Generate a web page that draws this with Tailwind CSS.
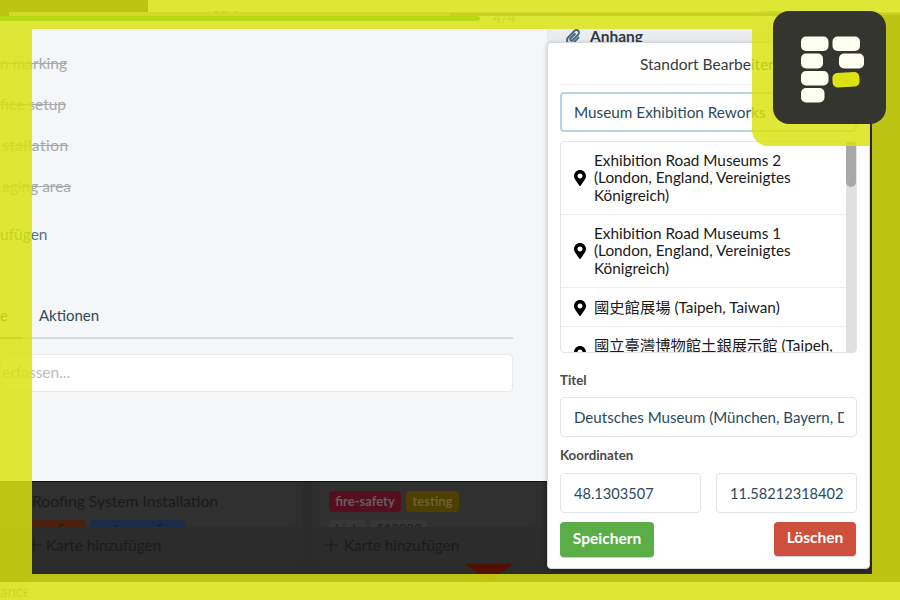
<!DOCTYPE html>
<html lang="de">
<head>
    <meta charset="UTF-8">
    <meta name="viewport" content="width=device-width, initial-scale=1.0">
    <script src="https://cdn.jsdelivr.net/npm/@tailwindcss/browser@4"></script>
    <title>Standort Bearbeiten</title>
</head>
<body class="relative w-[900px] h-[600px] overflow-hidden bg-[#f6f6f6] [font-family:Lato,'Noto_Sans_CJK_TC',sans-serif]">

    <!-- app behind the frame -->
    <div class="absolute left-[198px] top-[8px] h-[4px] overflow-hidden text-[12px] leading-[14px] text-[#888]">LABELS</div>
    <div class="absolute left-[750px] top-[8px] h-[4px] overflow-hidden text-[12px] leading-[14px] text-[#888]">LISTE</div>
    <div class="absolute left-[493px] top-[7px] text-[14px] text-[#999]">4/4</div>
    <div class="absolute left-0 top-0 w-[148px] h-[12px] bg-[#2a2a1a]"></div>
    <div class="absolute left-0 top-[12px] w-[9px] h-[4px] bg-[#2a2a1a]"></div>
    <div class="absolute left-[9px] top-[12px] w-[891px] h-[4px] bg-[#a8a8a0]"></div>
    <div class="absolute left-[450px] top-[13px] w-[450px] h-[3px] bg-[#777770]"></div>
    <div class="absolute left-0 top-[16px] w-[480px] h-[5px] rounded-r bg-[#0ca52a]"></div>
    <div class="absolute left-[870px] top-[15px] w-[30px] h-[567px] bg-[#2a2a2a]"></div>
    <div class="absolute left-0 top-[582px] w-[28px] h-[18px] overflow-hidden bg-[#ececec] text-[15px] leading-[18px] text-[#999]">ance</div>

    <!-- dark board under the modal -->
    <div class="absolute left-0 top-[482px] w-[900px] h-[100px] bg-[#2a2b2a] flex gap-[9px] text-[#1b1c1c]">
        <div class="w-[303px] h-[81px] shrink-0 rounded-b bg-[#2e2e2e] flex flex-col">
            <div class="h-[45px] mr-[8px] bg-[#303030] pl-[32px] pt-[9px] overflow-hidden">
                <div class="text-[15.7px] leading-[20px]">Roofing System Installation</div>
                <div class="flex gap-[4px] mt-[9px] text-[13px] font-bold text-[#1b1c1c]">
                    <span class="w-[54px] h-[20px] rounded bg-[#4a1f10] text-center">roofing</span>
                    <span class="w-[95px] h-[20px] rounded bg-[#1a2c4a] text-center">waterproofing</span>
                </div>
            </div>
            <div class="h-[36px] rounded-b bg-[#2b2c2b] flex items-center gap-[5px] pl-[27px] text-[15.3px]">
                <svg class="w-[14px] h-[14px]" viewBox="0 0 14 14" fill="none" stroke="#1b1c1c" stroke-width="1"><path d="M7 0v14M0 7h14"/></svg>
                <span>Karte hinzufügen</span>
            </div>
        </div>
        <div class="w-[231px] h-[81px] shrink-0 rounded-b bg-[#2e2e2e] flex flex-col">
            <div class="h-[45px] mx-[8px] bg-[#303030] pl-[9px] pt-[9px] overflow-hidden">
                <div class="flex gap-[5px] text-[13px] font-bold text-[#6b5a5e]">
                    <span class="w-[72px] h-[21px] rounded bg-[#55101f] flex items-center justify-center">fire-safety</span>
                    <span class="w-[53px] h-[21px] rounded bg-[#4e3e00] flex items-center justify-center text-[#6e6030]">testing</span>
                </div>
                <div class="flex gap-[5px] mt-[8px] text-[13px] text-[#1f2020]">
                    <span class="w-[37px] h-[20px] rounded bg-[#363636] text-center">high</span>
                    <span class="w-[56px] h-[20px] rounded bg-[#363636] text-center">$12000</span>
                </div>
            </div>
            <div class="h-[36px] rounded-b bg-[#2b2c2b] flex items-center gap-[6px] pl-[12px] text-[15.3px]">
                <svg class="w-[14px] h-[14px]" viewBox="0 0 14 14" fill="none" stroke="#1b1c1c" stroke-width="1"><path d="M7 0v14M0 7h14"/></svg>
                <span>Karte hinzufügen</span>
            </div>
        </div>
    </div>
    <svg class="absolute left-[465px] top-[564px]" width="48" height="18" viewBox="0 0 48 18"><path d="M0 0h48L24 18z" fill="#521100"/></svg>

    <!-- card modal -->
    <div class="absolute left-0 top-[29px] w-[547px] h-[453px] bg-[#f5f6f8] border-b border-[#111]">
        <div class="flex flex-col text-[15.5px] text-[#a8a9ab] line-through leading-[20px] pt-[24px] gap-[21px]">
            <div>n marking</div>
            <div>fice setup</div>
            <div class="ml-[2px] tracking-[0.5px]">stallation</div>
            <div class="ml-[2px]">aging area</div>
        </div>
        <div class="text-[15.5px] text-[#5b7083] leading-[20px] mt-[28px]">ufügen</div>
        <div class="mt-[61px] w-[513px] h-[34px] relative border-b-2 border-[#d9dadc] flex text-[15px] leading-[20px] text-[#2c4a5e]">
            <span class="w-[39px] overflow-hidden">e</span>
            <span>Aktionen</span>
            <div class="absolute left-0 -bottom-[2px] w-[22px] h-[2px] bg-[#8fa0ad]"></div>
        </div>
        <div class="mt-[15px] w-[513px] h-[38px] rounded bg-white border border-[#e8e9ec] flex items-center pl-[1px] text-[15.5px] text-[#bcbcbc] whitespace-nowrap">erfassen...</div>
    </div>

    <!-- attachment header behind the popup -->
    <div class="absolute left-[547px] top-[29px] w-[323px] h-[20px] bg-[#e9edf0] flex items-start gap-[10px] pl-[19px] overflow-hidden">
        <svg class="w-[14px] h-[16px]" viewBox="0 0 448 512" fill="#4a6a80"><path d="M43.246 466.142c-58.43-60.289-57.341-157.511 1.386-217.581L254.392 34c44.316-45.332 116.351-45.336 160.671 0 43.89 44.894 43.943 117.329 0 162.276L232.214 383.128c-29.855 30.537-78.633 30.111-107.982-.998-28.275-29.97-27.368-77.473 1.452-106.953l143.743-146.835c6.182-6.314 16.312-6.422 22.626-.241l22.861 22.379c6.315 6.182 6.422 16.312.241 22.626L171.427 319.927c-4.932 5.045-5.236 13.428-.648 18.292 4.372 4.634 11.245 4.711 15.688.165l182.849-186.851c19.613-20.062 19.613-52.725-.011-72.798-19.189-19.627-49.957-19.637-69.154 0L90.39 293.295c-34.763 35.56-35.299 93.12-1.191 128.313 34.01 35.093 88.985 35.137 123.058.286l172.06-175.999c6.177-6.319 16.307-6.433 22.626-.256l22.877 22.364c6.319 6.177 6.434 16.307.256 22.626l-172.06 175.998c-59.576 60.938-155.943 60.216-214.77-.485z"/></svg>
        <span class="-mt-[1px] text-[15.5px] leading-[16px] font-bold text-[#2e3a42]">Anhang</span>
    </div>

    <!-- location popup -->
    <div class="absolute left-[547px] top-[42px] w-[323px] h-[527px] bg-white rounded border border-[#d8d9db] shadow-[0_1px_4px_rgba(0,0,0,0.25)] px-[12px] flex flex-col">
        <div class="h-[42px] shrink-0 border-b border-[#eeeeee] flex items-center justify-center pt-[2px] text-[15.5px] text-[#3a3a3a]">Standort Bearbeiten</div>
        <input class="mt-[7px] h-[40px] shrink-0 w-full rounded border-2 border-[#b7d3e6] pl-[12px] pr-[12px] text-[15.3px] text-[#2c4a5e] outline-none" value="Museum Exhibition Reworks">

        <div class="mt-[9px] h-[212px] shrink-0 rounded border border-[#e3e3e3] overflow-hidden flex text-[15.3px] leading-[17.3px] text-[#1a1a1a]">
            <div class="flex-1 min-w-0">
                <div class="h-[73px] border-b border-[#eeeeee] flex items-center gap-[8px] pl-[13px] pr-[20px]">
                    <svg class="w-[12px] h-[16px] shrink-0" viewBox="0 0 384 512" fill="#000"><path d="M172.268 501.67C26.97 291.031 0 268.413 0 192 0 85.961 85.961 0 192 0s192 85.961 192 192c0 76.413-26.97 99.031-172.268 309.67-9.535 13.774-29.93 13.773-39.464 0zM192 272c44.183 0 80-35.817 80-80s-35.817-80-80-80-80 35.817-80 80 35.817 80 80 80z"/></svg>
                    <span>Exhibition Road Museums 2 (London, England, Vereinigtes Königreich)</span>
                </div>
                <div class="h-[73px] border-b border-[#eeeeee] flex items-center gap-[8px] pl-[13px] pr-[20px]">
                    <svg class="w-[12px] h-[16px] shrink-0" viewBox="0 0 384 512" fill="#000"><path d="M172.268 501.67C26.97 291.031 0 268.413 0 192 0 85.961 85.961 0 192 0s192 85.961 192 192c0 76.413-26.97 99.031-172.268 309.67-9.535 13.774-29.93 13.773-39.464 0zM192 272c44.183 0 80-35.817 80-80s-35.817-80-80-80-80 35.817-80 80 35.817 80 80 80z"/></svg>
                    <span>Exhibition Road Museums 1 (London, England, Vereinigtes Königreich)</span>
                </div>
                <div class="h-[39px] border-b border-[#eeeeee] flex items-center gap-[8px] pl-[13px] pr-[8px] pt-[1px]">
                    <svg class="w-[12px] h-[16px] shrink-0" viewBox="0 0 384 512" fill="#000"><path d="M172.268 501.67C26.97 291.031 0 268.413 0 192 0 85.961 85.961 0 192 0s192 85.961 192 192c0 76.413-26.97 99.031-172.268 309.67-9.535 13.774-29.93 13.773-39.464 0zM192 272c44.183 0 80-35.817 80-80s-35.817-80-80-80-80 35.817-80 80 35.817 80 80 80z"/></svg>
                    <span>國史館展場 (Taipeh, Taiwan)</span>
                </div>
                <div class="h-[54px] flex items-start gap-[8px] pl-[13px] pr-[8px] pt-[10px]">
                    <svg class="w-[12px] h-[16px] shrink-0 mt-[9px]" viewBox="0 0 384 512" fill="#000"><path d="M172.268 501.67C26.97 291.031 0 268.413 0 192 0 85.961 85.961 0 192 0s192 85.961 192 192c0 76.413-26.97 99.031-172.268 309.67-9.535 13.774-29.93 13.773-39.464 0zM192 272c44.183 0 80-35.817 80-80s-35.817-80-80-80-80 35.817-80 80 35.817 80 80 80z"/></svg>
                    <span>國立臺灣博物館土銀展示館 (Taipeh, Taiwan)</span>
                </div>
            </div>
            <div class="w-[10px] shrink-0 bg-[#e0e0e0]">
                <div class="h-[45px] rounded-b-full bg-[#a8a8a8]"></div>
            </div>
        </div>

        <label class="mt-[19px] text-[13.3px] leading-[16px] font-bold text-[#4a4a4a]">Titel</label>
        <input class="mt-[9px] h-[40px] shrink-0 w-full rounded border border-[#e3e4e6] pl-[13px] pr-[12px] text-[15.1px] text-[#2c4a5e] outline-none" value="Deutsches Museum (München, Bayern, Deutschland)">
        <label class="mt-[10px] text-[13.3px] leading-[16px] font-bold text-[#4a4a4a]">Koordinaten</label>
        <div class="mt-[10px] flex gap-[15px]">
            <input class="w-[141px] h-[40px] rounded border border-[#e3e4e6] pl-[13px] pr-[11px] text-[14.6px] text-[#2c4a5e] outline-none" value="48.1303507">
            <input class="w-[141px] h-[40px] rounded border border-[#e3e4e6] pl-[13px] pr-[11px] text-[14.6px] text-[#2c4a5e] outline-none" value="11.58212318402">
        </div>
        <div class="mt-[9px] flex justify-between pr-[1px]">
            <button class="w-[94px] h-[35px] rounded bg-[#5aad47] text-white text-[15.5px] font-bold pb-[2px] shadow-[0_1px_1px_rgba(0,0,0,0.2)]">Speichern</button>
            <button class="w-[82px] h-[34px] rounded bg-[#cf4f3d] text-white text-[15.5px] font-bold pb-[2px] shadow-[0_1px_1px_rgba(0,0,0,0.2)]">Löschen</button>
        </div>
    </div>

    <!-- translucent yellow frame -->
    <div class="absolute left-0 top-0 w-[900px] h-[29px] bg-[#dae310]/[0.835]"></div>
    <div class="absolute left-0 top-[29px] w-[32px] h-[545px] bg-[#dae310]/[0.835]"></div>
    <div class="absolute left-[872px] top-[29px] w-[28px] h-[545px] bg-[#dae310]/[0.835]"></div>
    <div class="absolute left-0 top-[574px] w-[900px] h-[26px] bg-[#dae310]/[0.835]"></div>
    <div class="absolute left-[752px] top-[29px] w-[118px] h-[117px] rounded-bl-[16px] bg-[#dae310]/[0.835]"></div>

    <!-- logo -->
    <div class="absolute left-[773px] top-[11px] w-[113px] h-[113px] rounded-[16px] bg-[#33352e]">
        <svg width="113" height="113" viewBox="0 0 113 113">
            <g fill="#fdfdf0">
                <rect x="28" y="25.5" width="27.5" height="14.5" rx="5"/>
                <rect x="59.5" y="25.5" width="27.5" height="14.5" rx="5"/>
                <rect x="28" y="42.5" width="22" height="15" rx="5"/>
                <rect x="66" y="42.5" width="25" height="15" rx="5"/>
                <rect x="28" y="60" width="27.5" height="14.5" rx="5"/>
                <rect x="28" y="77" width="23.5" height="14.5" rx="5"/>
            </g>
            <rect x="59.5" y="61.5" width="27" height="14.5" rx="5" fill="#dde312" transform="rotate(-4 73 69)"/>
        </svg>
    </div>
</body>
</html>
